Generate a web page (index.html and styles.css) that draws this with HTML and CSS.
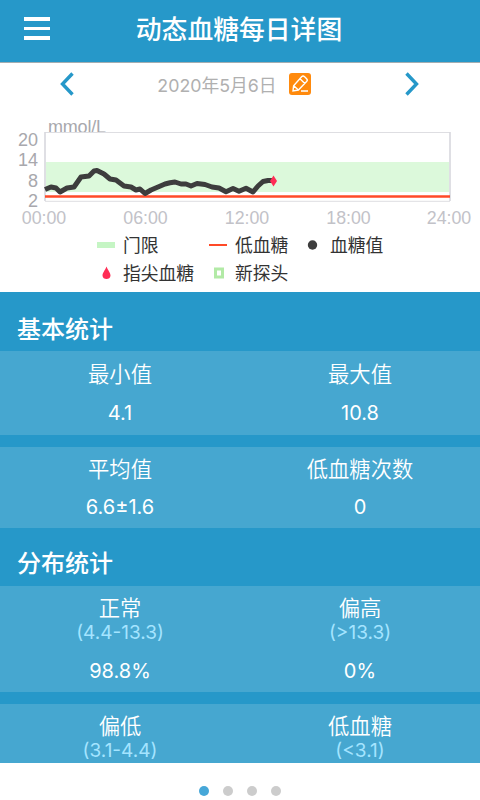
FILE: index.html
```html
<!DOCTYPE html>
<html lang="zh-CN">
<head>
    <meta charset="UTF-8">
    <meta name="viewport" content="width=device-width, initial-scale=1.0">
    <title>动态血糖每日详图</title>
    <link rel="stylesheet" href="styles.css">
</head>
<body>

<div class="app">
    <header class="header">
        <div class="menu">
            <span></span>
            <span></span>
            <span></span>
        </div>
        <h1>动态血糖每日详图</h1>
    </header>

    <div class="date-bar">
        <svg class="arrow" width="16" height="26" viewBox="0 0 16 26"><path d="M13.5 2.5 L3.5 13 L13.5 23.5"/></svg>
        <div class="date">
            <span>2020年5月6日</span>
            <svg class="edit" width="22" height="22" viewBox="0 0 22 22">
                <rect width="22" height="22" rx="3" fill="#ff8a0d"/>
                <path d="M4 18 L4.6 12.8 L12.6 3.8 Q14 2.4 15.6 3.8 L17.6 5.8 Q19 7.2 17.6 8.6 L9.4 17 Z M4.8 12.8 L9.3 17 M11 5.8 L15.8 10.4 M12 18 H19"/>
            </svg>
        </div>
        <svg class="arrow" width="16" height="26" viewBox="0 0 16 26"><path d="M2.5 2.5 L12.5 13 L2.5 23.5"/></svg>
    </div>

    <svg class="chart" width="480" height="124" viewBox="0 106 480 124">
        <text class="unit" x="48" y="132.5" textLength="58">mmol/L</text>
        <rect x="46" y="162" width="403" height="30" fill="#dcf9db"/>
        <path class="grid" d="M45 132.5 H450 M45 201.3 H450"/>
        <path class="axis" d="M45 132 V201 M450 132 V201"/>
        <path class="low" d="M45 196.5 H450"/>
        <polyline class="curve" points="45,189.5 51,187 56,188 60,192 67,188 74,187 81,177 89,176 94,171 97,170.5 104,174 110,179 116,180 124,186 131,187 136,190 140,189 145,193.5 151,190 158,187 165,184 170,182.8 175,182 181,184 186,184 191,186 197,183.5 205,184.5 212,187 219,188 226,191.7 233,188.5 239,191.3 246,188.3 253,192 258,186 263,181.5 268,180.5 273,180.5"/>
        <path fill="#ff2d55" d="M273.5 175.5 L277 181 L273.5 186.5 L270 181 Z"/>
        <g class="y-labels">
            <text x="38" y="146">20</text>
            <text x="38" y="166">14</text>
            <text x="38" y="186.5">8</text>
            <text x="38" y="207">2</text>
        </g>
        <g class="x-labels">
            <text x="44" y="224.3">00:00</text>
            <text x="145.5" y="224.3">06:00</text>
            <text x="247" y="224.3">12:00</text>
            <text x="348.5" y="224.3">18:00</text>
            <text x="449" y="224.3">24:00</text>
        </g>
    </svg>

    <div class="legend">
        <div class="item"><svg width="20" height="20"><rect x="1" y="8" width="18" height="6" fill="#c5f5c4"/></svg>门限</div>
        <div class="item"><svg width="20" height="20"><rect x="1" y="10" width="18" height="2" fill="#ff4a28"/></svg>低血糖</div>
        <div class="item"><svg width="20" height="20"><circle cx="9.5" cy="11" r="4.7" fill="#3d3d3d"/></svg>血糖值</div>
        <div class="item"><svg width="20" height="20"><path d="M10.5 4.5 C12 8.5 14.5 10.5 14.5 13.5 C14.5 18.3 6.5 18.3 6.5 13.5 C6.5 10.5 9 8.5 10.5 4.5 Z" fill="#ff2d55"/></svg>指尖血糖</div>
        <div class="item"><svg width="20" height="20"><rect x="7.5" y="7" width="7" height="8" fill="#fff" stroke="#b2eaa6" stroke-width="3"/></svg>新探头</div>
    </div>

    <main class="stats">
        <h2>基本统计</h2>
        <div class="row first">
            <div class="cell">
                <div class="label">最小值</div>
                <div class="value">4.1</div>
            </div>
            <div class="cell">
                <div class="label">最大值</div>
                <div class="value">10.8</div>
            </div>
        </div>
        <div class="row second">
            <div class="cell">
                <div class="label">平均值</div>
                <div class="value">6.6±1.6</div>
            </div>
            <div class="cell">
                <div class="label">低血糖次数</div>
                <div class="value">0</div>
            </div>
        </div>

        <h2 class="distribution">分布统计</h2>
        <div class="row ranges">
            <div class="cell">
                <div class="label">正常</div>
                <div class="range">(4.4-13.3)</div>
                <div class="value">98.8%</div>
            </div>
            <div class="cell">
                <div class="label">偏高</div>
                <div class="range">(&gt;13.3)</div>
                <div class="value">0%</div>
            </div>
        </div>
        <div class="row ranges">
            <div class="cell">
                <div class="label">偏低</div>
                <div class="range">(3.1-4.4)</div>
            </div>
            <div class="cell">
                <div class="label">低血糖</div>
                <div class="range">(&lt;3.1)</div>
            </div>
        </div>
    </main>

    <footer class="pager">
        <span class="dot active"></span>
        <span class="dot"></span>
        <span class="dot"></span>
        <span class="dot"></span>
    </footer>
</div>

</body>
</html>
```
FILE: styles.css
```css
* {
    box-sizing: border-box;
}
body {
    margin: 0;
    font-family: Inter, "Noto Sans CJK SC", sans-serif;
    background: #fff;
}
svg {
    display: block;
    flex: none;
}
.app {
    width: 480px;
    height: 800px;
    display: flex;
    flex-direction: column;
    overflow: hidden;
}
.header {
    flex: none;
    height: 63px;
    display: grid;
    grid-template-columns: 73px 1fr 75px;
    background: #2698c9;
    border-bottom: 1px solid #a3adb1;
}
.menu {
    display: flex;
    flex-direction: column;
    gap: 6px;
    padding: 17px 0 0 24px;
}
.menu span {
    width: 26px;
    height: 3.5px;
    background: #fff;
}
h1 {
    margin: 0;
    font-size: 25.8px;
    font-weight: 500;
    line-height: 60px;
    text-align: center;
    color: #fff;
}
.date-bar {
    flex: none;
    height: 43px;
    display: flex;
    align-items: center;
    justify-content: space-between;
    padding: 0 60px 1px 59px;
}
.arrow path {
    fill: none;
    stroke: #2698c9;
    stroke-width: 3.4;
}
.date {
    display: flex;
    align-items: center;
    gap: 12px;
    margin-right: 11px;
    font-size: 17.8px;
    font-weight: 400;
    color: #b0b0b0;
}
.edit path {
    fill: none;
    stroke: #fff;
    stroke-width: 1.4;
}
.chart {
    font-family: "Liberation Sans", Arial, sans-serif;
    font-size: 18px;
}
.unit {
    fill: #a8a8ad;
}
.grid {
    stroke: #dedee2;
    stroke-width: 1;
}
.axis {
    stroke: #d8d8de;
    stroke-width: 1.6;
}
.low {
    stroke: #ff4a28;
    stroke-width: 2.4;
}
.curve {
    fill: none;
    stroke: #3d3d3d;
    stroke-width: 5;
    stroke-linejoin: round;
}
.y-labels {
    fill: #a8a8ad;
    text-anchor: end;
}
.x-labels {
    fill: #c2c2c8;
    font-size: 17.8px;
    text-anchor: middle;
}
.legend {
    flex: none;
    height: 62px;
    display: grid;
    grid-template-columns: 112px 95px 1fr;
    grid-template-rows: 28px 28px;
    padding: 0 0 0 96px;
    font-size: 17.8px;
    color: #333;
}
.item {
    display: flex;
    align-items: center;
    gap: 7px;
}
.stats {
    flex: none;
    height: 471px;
    overflow: hidden;
    background: #2698c9;
    color: #fff;
}
h2 {
    margin: 0;
    height: 59px;
    padding: 9px 0 0 17px;
    font-size: 24px;
    font-weight: 500;
    line-height: 58px;
}
.distribution {
    height: 58px;
    padding-top: 7px;
}
.row {
    display: grid;
    grid-template-columns: 1fr 1fr;
    padding-top: 8px;
    background: #46a7d0;
    text-align: center;
}
.first {
    height: 84px;
    margin-bottom: 12px;
}
.first .value {
    margin-top: 9px;
}
.second {
    height: 81px;
    padding-top: 7px;
}
.ranges {
    height: 106px;
    margin-bottom: 12px;
    padding-top: 7px;
}
.label {
    font-size: 21.3px;
    font-weight: 350;
    line-height: 31px;
}
.value {
    margin-top: 8px;
    font-size: 20px;
    line-height: 28px;
}
.range {
    height: 20px;
    font-size: 19px;
    line-height: 17px;
    color: #a4e4ff;
}
.ranges .value {
    margin-top: 13px;
}
.pager {
    flex: 1;
    display: flex;
    justify-content: center;
    gap: 14px;
    padding-top: 23px;
}
.dot {
    width: 10px;
    height: 10px;
    border-radius: 50%;
    background: #ccc;
}
.active {
    background: #46a7d8;
}
```
